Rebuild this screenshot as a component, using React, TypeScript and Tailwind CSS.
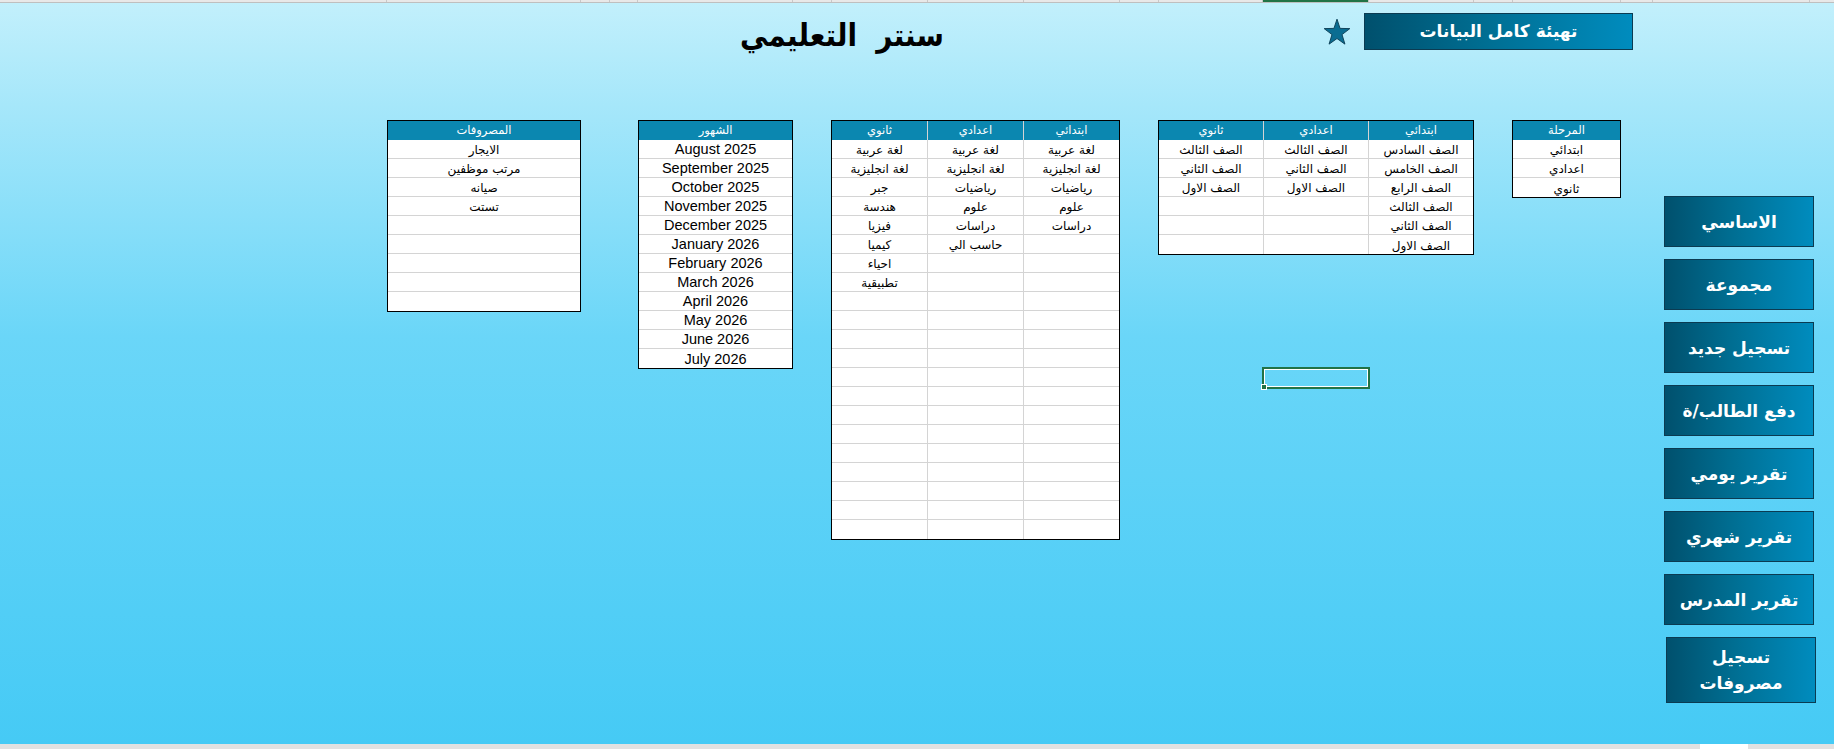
import React from "react";

const AR = "font-['DejaVu_Sans',sans-serif]";

type TableProps = {
  widthClass: string;
  headers: string[];
  cols: string[][];
  rows: number;
  cellClass: string;
};

function Table({ widthClass, headers, cols, rows, cellClass }: TableProps) {
  const n = headers.length;
  return (
    <div className={`${widthClass} shrink-0 border border-black bg-white`}>
      <div dir="rtl" className="flex h-[19px] bg-[#0b87b0] text-white">
        {headers.map((h, i) => (
          <div
            key={i}
            className={`flex flex-1 items-center justify-center pt-[1px] ${AR} text-[11.5px] ${
              i < n - 1 ? "border-l border-[#d4d4d4]" : ""
            }`}
          >
            {h}
          </div>
        ))}
      </div>
      {Array.from({ length: rows }).map((_, r) => (
        <div
          key={r}
          dir="rtl"
          className={`flex h-[19px] ${r < rows - 1 ? "border-b border-[#d4d4d4]" : ""}`}
        >
          {cols.map((c, i) => (
            <div
              key={i}
              className={`flex flex-1 items-center justify-center pt-[2px] text-black ${cellClass} ${
                i < n - 1 ? "border-l border-[#d4d4d4]" : ""
              }`}
            >
              {c[r] ?? ""}
            </div>
          ))}
        </div>
      ))}
    </div>
  );
}

function Star() {
  return (
    <svg width="28" height="28" viewBox="0 0 24 24" className="shrink-0">
      <polygon
        points="12,1 14.6,8.9 23,9.1 16.3,14.2 18.8,22.4 12,17.6 5.2,22.4 7.7,14.2 1,9.1 9.4,8.9"
        fill="#0a6d92"
        stroke="#0b3d55"
        strokeWidth="0.8"
        strokeLinejoin="miter"
      />
    </svg>
  );
}

const SEGMENTS = [
  "w-[387px]",
  "w-[194px]",
  "w-[29px]",
  "w-[28px]",
  "w-[155px]",
  "w-[39px]",
  "w-[96px]",
  "w-[96px]",
  "w-[96px]",
  "w-[39px]",
  "w-[104px]",
  "w-[106px]",
  "w-[105px]",
  "w-[39px]",
  "w-[108px]",
  "w-[32px]",
  "w-[157px]",
];

function NavButton({ children, extra }: { children: React.ReactNode; extra?: string }) {
  return (
    <div
      className={`flex items-center justify-center border border-[#0b3b52] bg-[linear-gradient(90deg,#00506d_0%,#006e92_45%,#008cbe_100%)] text-center font-bold leading-[26px] text-white ${AR} ${
        extra ?? "h-[51px] w-[150px] text-[17px]"
      }`}
    >
      {children}
    </div>
  );
}

export default function App() {
  const expenses = ["الايجار", "مرتب موظفين", "صيانه", "تستت"];
  const months = [
    "August 2025",
    "September 2025",
    "October 2025",
    "November 2025",
    "December 2025",
    "January 2026",
    "February 2026",
    "March 2026",
    "April 2026",
    "May 2026",
    "June 2026",
    "July 2026",
  ];
  const subjPrimary = ["لغة عربية", "لغة انجليزية", "رياضيات", "علوم", "دراسات"];
  const subjPrep = ["لغة عربية", "لغة انجليزية", "رياضيات", "علوم", "دراسات", "حاسب الي"];
  const subjSec = ["لغة عربية", "لغة انجليزية", "جبر", "هندسة", "فيزيا", "كيميا", "احياء", "تطبيقية"];
  const gradesPrimary = [
    "الصف السادس",
    "الصف الخامس",
    "الصف الرابع",
    "الصف الثالث",
    "الصف الثاني",
    "الصف الاول",
  ];
  const gradesThree = ["الصف الثالث", "الصف الثاني", "الصف الاول"];

  return (
    <div className="relative flex h-[749px] w-[1834px] flex-col overflow-hidden bg-[linear-gradient(180deg,#c3f0fc_0%,#a6e7fa_14%,#6ad6f8_45%,#45caf5_100%)]">
      {/* top column-header strip */}
      <div className="flex h-[3px] shrink-0 border-b border-[#bfbfbf] bg-[#e8e8e8]">
        {SEGMENTS.map((w, i) => (
          <div
            key={i}
            className={`${w} shrink-0 border-r border-[#c8c8c8] ${i === 11 ? "bg-[#217346]" : ""}`}
          />
        ))}
        <div className="flex-1" />
      </div>

      {/* main area */}
      <div className="flex flex-1">
        <div className="flex w-[1664px] shrink-0 flex-col">
          {/* header row */}
          <div className="flex h-[117px] items-start">
            <div
              className={`ml-[642px] mt-[7px] w-[400px] text-center font-['DejaVu_Sans_Condensed','DejaVu_Sans',sans-serif] text-[31px] font-bold leading-[50px] text-black`}
            >
              سنتر&nbsp;&nbsp;التعليمي
            </div>
            <div className="ml-[281px] mt-[15px]">
              <Star />
            </div>
            <div
              className={`ml-[13px] mt-[10px] flex h-[37px] w-[269px] items-center justify-center border border-[#0b3b52] bg-[linear-gradient(90deg,#00506d_0%,#006e92_45%,#008cbe_100%)] text-[17px] font-bold text-white ${AR}`}
            >
              تهيئة كامل البيانات
            </div>
          </div>

          {/* tables row */}
          <div className="flex items-start pl-[387px]">
            <Table
              widthClass="w-[194px]"
              headers={["المصروفات"]}
              cols={[expenses]}
              rows={9}
              cellClass={`${AR} text-[12px]`}
            />
            <div className="ml-[57px]">
              <Table
                widthClass="w-[155px]"
                headers={["الشهور"]}
                cols={[months]}
                rows={12}
                cellClass="font-['Liberation_Sans',Arial,sans-serif] text-[14.5px]"
              />
            </div>
            <div className="ml-[38px]">
              <Table
                widthClass="w-[289px]"
                headers={["ابتدائي", "اعدادي", "ثانوي"]}
                cols={[subjPrimary, subjPrep, subjSec]}
                rows={21}
                cellClass={`${AR} text-[12px]`}
              />
            </div>
            <div className="ml-[38px]">
              <Table
                widthClass="w-[316px]"
                headers={["ابتدائي", "اعدادي", "ثانوي"]}
                cols={[gradesPrimary, gradesThree, gradesThree]}
                rows={6}
                cellClass={`${AR} text-[12px]`}
              />
            </div>
            <div className="ml-[38px]">
              <Table
                widthClass="w-[109px]"
                headers={["المرحلة"]}
                cols={[["ابتدائي", "اعدادي", "ثانوي"]]}
                rows={3}
                cellClass={`${AR} text-[12px]`}
              />
            </div>
          </div>
        </div>

        {/* right navigation buttons */}
        <div className="mt-[193px] flex w-[150px] shrink-0 flex-col gap-[12px]">
          <NavButton>الاساسي</NavButton>
          <NavButton>مجموعة</NavButton>
          <NavButton>تسجيل جديد</NavButton>
          <NavButton>دفع الطالب/ة</NavButton>
          <NavButton>تقرير يومي</NavButton>
          <NavButton>تقرير شهري</NavButton>
          <NavButton>تقرير المدرس</NavButton>
          <div className="ml-[2px]">
            <NavButton extra="h-[66px] w-[150px] text-[17px] px-6">
              <span>
                تسجيل
                <br />
                مصروفات
              </span>
            </NavButton>
          </div>
        </div>
      </div>

      {/* bottom strip */}
      <div className="flex h-[5px] shrink-0 bg-[#e1e1e1]">
        <div className="w-[1700px] shrink-0" />
        <div className="w-[48px] shrink-0 bg-white" />
      </div>

      {/* selected cell overlay */}
      <div className="absolute left-[1262px] top-[367px] h-[22px] w-[108px] border-2 border-[#217346]">
        <div className="h-full w-full border border-white" />
        <div className="absolute -bottom-[3px] -left-[3px] h-[6px] w-[6px] border border-white bg-[#217346]" />
      </div>
    </div>
  );
}
